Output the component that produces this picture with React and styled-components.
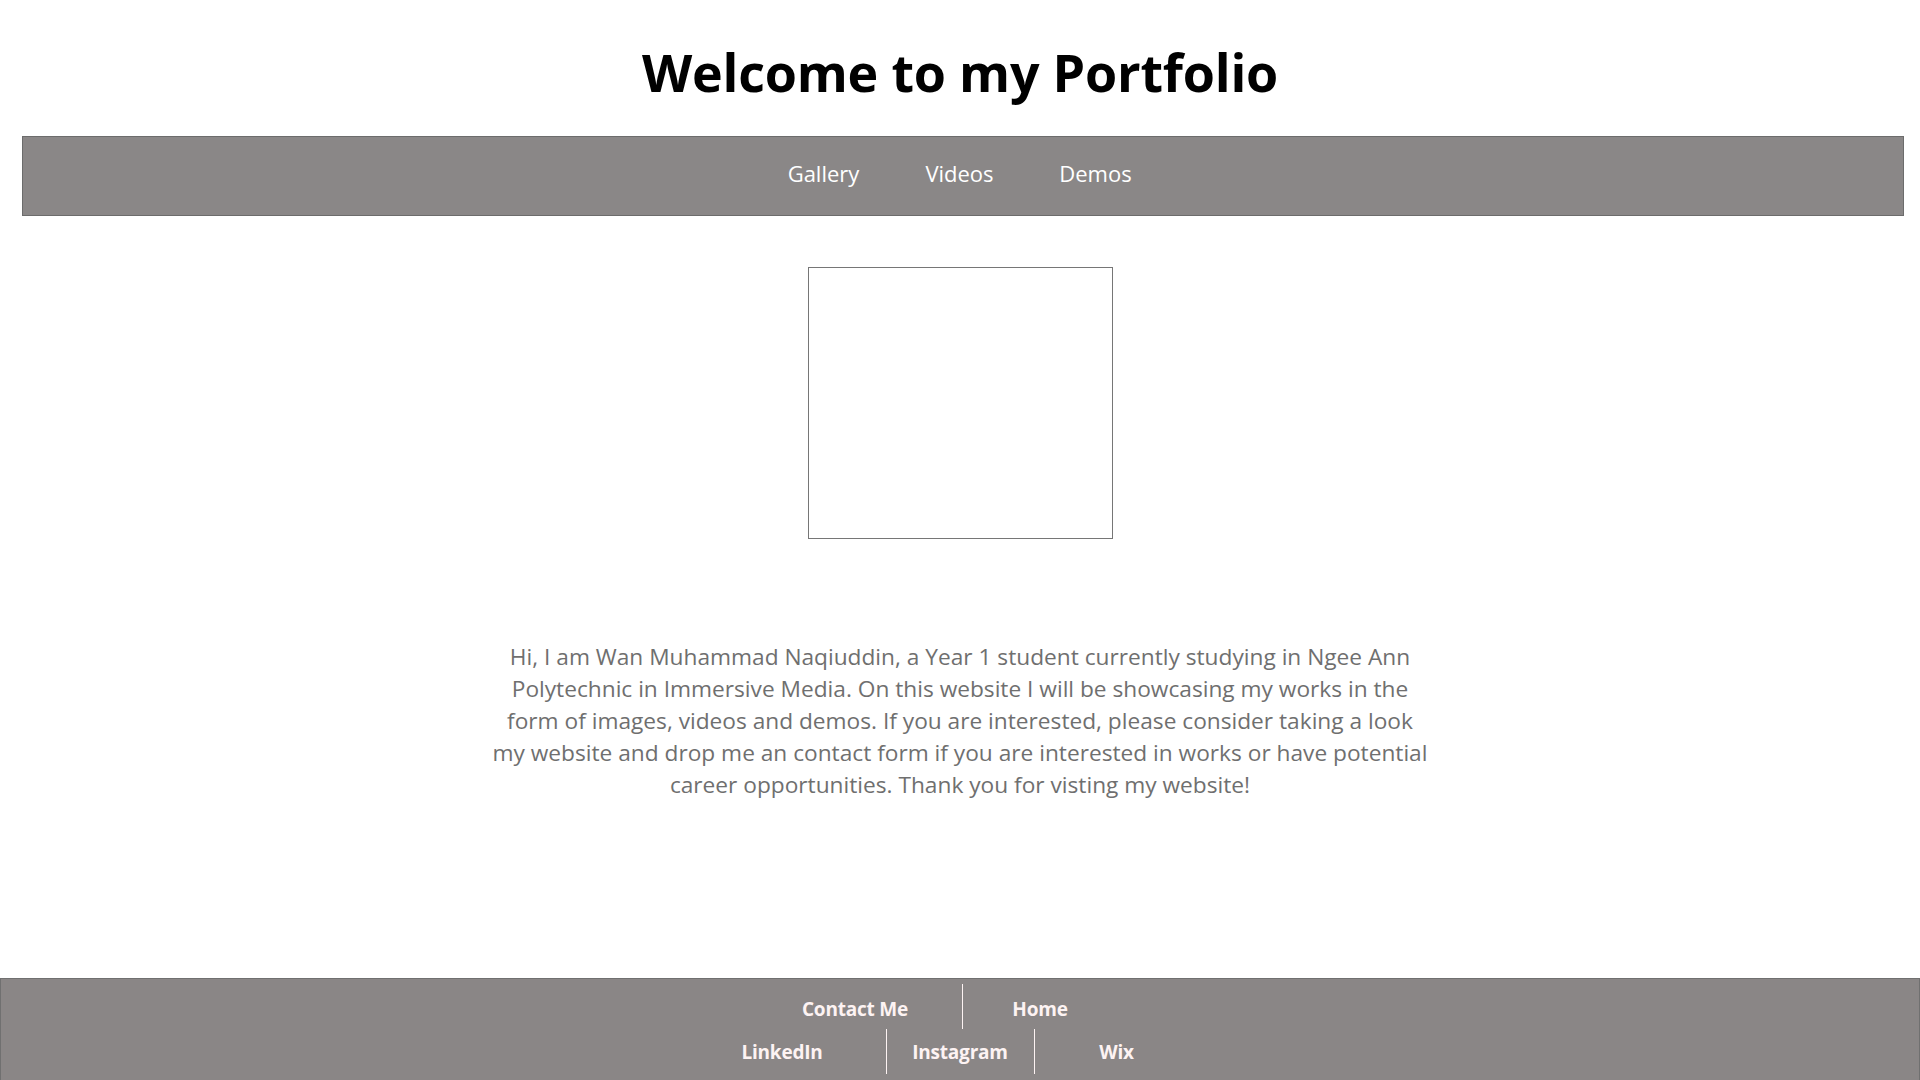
import React from "react";
import styled, { createGlobalStyle } from "styled-components";

const GlobalStyle = createGlobalStyle`
  html, body {
    margin: 0;
    padding: 0;
    background: #ffffff;
  }
  body {
    font-family: "Open Sans", "Noto Sans", "DejaVu Sans", sans-serif;
  }
  * { box-sizing: border-box; }
`;

const Page = styled.div`
  min-height: 100vh;
  display: flex;
  flex-direction: column;
`;

const Title = styled.h1`
  margin: 0;
  padding-top: 40px;
  text-align: center;
  font-size: 52px;
  line-height: 64px;
  font-weight: 700;
  letter-spacing: -0.2px;
  color: #000;
`;

const NavBar = styled.nav`
  margin: 32px 16px 0 22px;
  height: 80px;
  background: #8a8787;
  border: 1px solid #6c6c6c;
  display: flex;
  justify-content: center;
  padding: 20px 7px 0 0;
`;

const NavLink = styled.a`
  width: 136px;
  text-align: center;
  color: #ffffff;
  font-size: 22px;
  line-height: 32px;
  text-decoration: none;
`;

const Main = styled.main`
  display: flex;
  flex-direction: column;
  align-items: center;
`;

const Photo = styled.div`
  margin-top: 51px;
  width: 305px;
  height: 272px;
  border: 1px solid #767676;
`;

const About = styled.p`
  margin: 102px 0 0;
  text-align: center;
  font-size: 22.7px;
  line-height: 32px;
  color: #6f6f6f;
`;

const Footer = styled.footer`
  margin-top: auto;
  background: #8a8686;
  border: 1px solid #707070;
  border-bottom: none;
  padding: 5px 0 6px;
  display: flex;
  flex-direction: column;
`;

const FooterRow = styled.div`
  display: flex;
  justify-content: center;
  padding-right: ${(p) => p.$shift}px;
`;

const FooterLink = styled.a`
  width: ${(p) => p.$w}px;
  height: 45px;
  padding-top: ${(p) => p.$top}px;
  line-height: ${(p) => 45 - p.$top}px;
  text-align: center;
  color: #fdf3f3;
  font-size: 19px;
  font-weight: 700;
  letter-spacing: -0.2px;
  text-decoration: none;
  border-left: ${(p) => (p.$left ? "1px solid #fdf3f3" : "none")};
  border-right: ${(p) => (p.$right ? "1px solid #fdf3f3" : "none")};
`;

export default function App() {
  return (
    <>
      <GlobalStyle />
      <Page>
        <Title>Welcome to my Portfolio</Title>
        <NavBar>
          <NavLink href="#">Gallery</NavLink>
          <NavLink href="#">Videos</NavLink>
          <NavLink href="#">Demos</NavLink>
        </NavBar>
        <Main>
          <Photo />
          <About>
            Hi, I am Wan Muhammad Naqiuddin, a Year 1 student currently studying in Ngee Ann
            <br />
            Polytechnic in Immersive Media. On this website I will be showcasing my works in the
            <br />
            form of images, videos and demos. If you are interested, please consider taking a look
            <br />
            my website and drop me an contact form if you are interested in works or have potential
            <br />
            career opportunities. Thank you for visting my website!
          </About>
        </Main>
        <Footer>
          <FooterRow $shift={55}>
            <FooterLink href="#" $w={215} $top={6} $right>Contact Me</FooterLink>
            <FooterLink href="#" $w={154} $top={6}>Home</FooterLink>
          </FooterRow>
          <FooterRow $shift={43}>
            <FooterLink href="#" $w={207} $top={2}>LinkedIn</FooterLink>
            <FooterLink href="#" $w={149} $top={2} $left $right>Instagram</FooterLink>
            <FooterLink href="#" $w={164} $top={2}>Wix</FooterLink>
          </FooterRow>
        </Footer>
      </Page>
    </>
  );
}
